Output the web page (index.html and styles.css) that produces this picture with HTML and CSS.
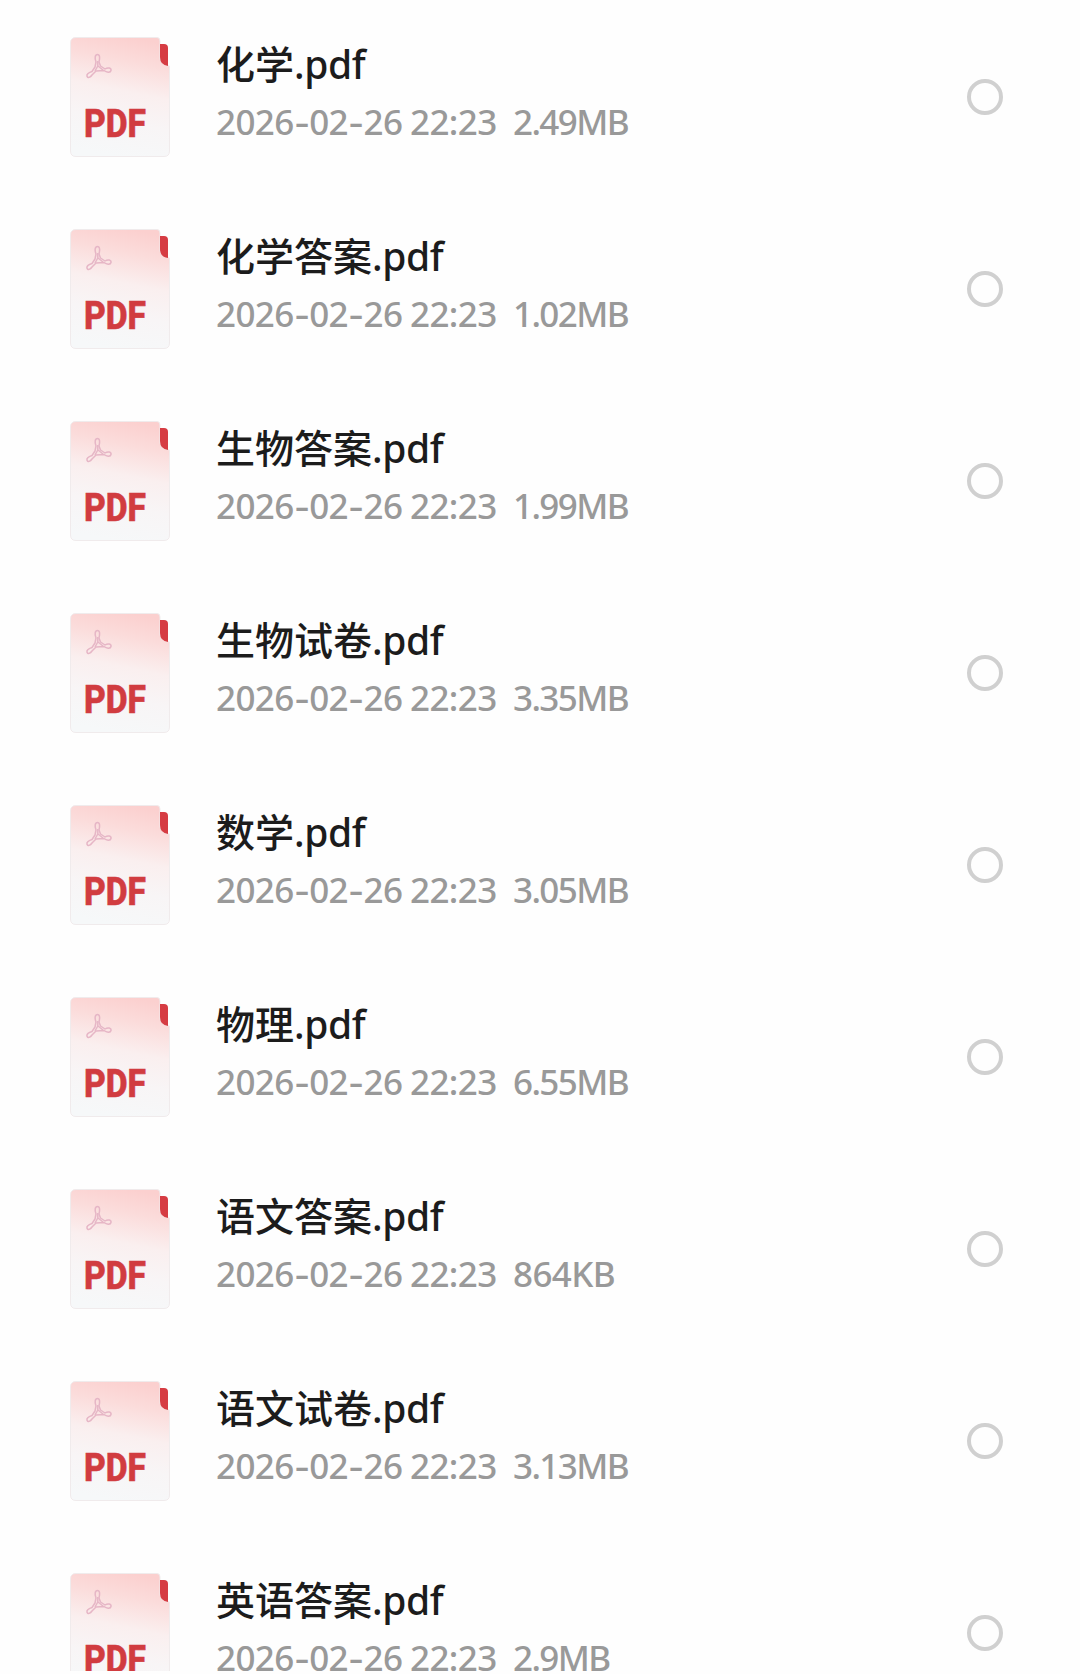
FILE: index.html
```html
<!DOCTYPE html>
<html lang="zh-Hans">
<head>
  <meta charset="UTF-8" />
  <title>选择文件</title>
  <link rel="stylesheet" href="styles.css">
</head>
<body>
  <!-- PDF 图标 -->
  <svg class="defs" width="0" height="0">
    <defs>
      <linearGradient id="paper" x1="0.62" y1="0" x2="0.45" y2="1">
        <stop offset="0" stop-color="#fbd0cf" />
        <stop offset="0.2" stop-color="#fbdcdb" />
        <stop offset="0.45" stop-color="#faefef" />
        <stop offset="0.7" stop-color="#f8f5f6" />
        <stop offset="1" stop-color="#f6f8f9" />
      </linearGradient>
      <symbol id="pdf" viewBox="0 0 100 120">
        <path d="M6 .5H87Q90 .5 90 4V22Q91 28 99.500 29V114Q99.500 119.500 94 119.500H6Q.5 119.500 .5 114V6Q.5 .5 6 .5Z" fill="url(#paper)" stroke="#f0ebec" stroke-width="1" />
        <path d="M90 7H94Q98 7 98 11V29Q90 28 90 20Z" fill="#d63c43" />
        <g fill="none" stroke="#e6b6c6" stroke-width="1.500" stroke-linejoin="round">
          <path d="M26 25C24.500 21 25 17.500 27.500 17.500C30 17.500 30 21 29 25L30.500 29L35 32C38 30 41.500 31 41 33.500C40.500 36 36.500 35.500 34 33.500L26 34L22 38C20.500 40.500 17.500 41.500 17 39C16.500 37 19 35.500 22 34.500L25 30Z" />
          <path d="M27.800 24V29L25 34M28 29L33 33" />
        </g>
        <text class="pdf-label" x="14" y="100" textLength="62" lengthAdjust="spacingAndGlyphs">PDF</text>
      </symbol>
    </defs>
  </svg>

  <ul class="file-list">
    <li class="file">
      <svg class="icon"><use href="#pdf" /></svg>
      <div class="info">
        <div class="name">化学<span class="ext">.pdf</span></div>
        <div class="meta"><span class="date">2026<i>-</i>02<i>-</i>26</span><span class="time">22:23</span><span class="size">2.49MB</span></div>
      </div>
      <span class="radio"></span>
    </li>
    <li class="file">
      <svg class="icon"><use href="#pdf" /></svg>
      <div class="info">
        <div class="name">化学答案<span class="ext">.pdf</span></div>
        <div class="meta"><span class="date">2026<i>-</i>02<i>-</i>26</span><span class="time">22:23</span><span class="size">1.02MB</span></div>
      </div>
      <span class="radio"></span>
    </li>
    <li class="file">
      <svg class="icon"><use href="#pdf" /></svg>
      <div class="info">
        <div class="name">生物答案<span class="ext">.pdf</span></div>
        <div class="meta"><span class="date">2026<i>-</i>02<i>-</i>26</span><span class="time">22:23</span><span class="size">1.99MB</span></div>
      </div>
      <span class="radio"></span>
    </li>
    <li class="file">
      <svg class="icon"><use href="#pdf" /></svg>
      <div class="info">
        <div class="name">生物试卷<span class="ext">.pdf</span></div>
        <div class="meta"><span class="date">2026<i>-</i>02<i>-</i>26</span><span class="time">22:23</span><span class="size">3.35MB</span></div>
      </div>
      <span class="radio"></span>
    </li>
    <li class="file">
      <svg class="icon"><use href="#pdf" /></svg>
      <div class="info">
        <div class="name">数学<span class="ext">.pdf</span></div>
        <div class="meta"><span class="date">2026<i>-</i>02<i>-</i>26</span><span class="time">22:23</span><span class="size">3.05MB</span></div>
      </div>
      <span class="radio"></span>
    </li>
    <li class="file">
      <svg class="icon"><use href="#pdf" /></svg>
      <div class="info">
        <div class="name">物理<span class="ext">.pdf</span></div>
        <div class="meta"><span class="date">2026<i>-</i>02<i>-</i>26</span><span class="time">22:23</span><span class="size">6.55MB</span></div>
      </div>
      <span class="radio"></span>
    </li>
    <li class="file">
      <svg class="icon"><use href="#pdf" /></svg>
      <div class="info">
        <div class="name">语文答案<span class="ext">.pdf</span></div>
        <div class="meta"><span class="date">2026<i>-</i>02<i>-</i>26</span><span class="time">22:23</span><span class="size kb">864KB</span></div>
      </div>
      <span class="radio"></span>
    </li>
    <li class="file">
      <svg class="icon"><use href="#pdf" /></svg>
      <div class="info">
        <div class="name">语文试卷<span class="ext">.pdf</span></div>
        <div class="meta"><span class="date">2026<i>-</i>02<i>-</i>26</span><span class="time">22:23</span><span class="size">3.13MB</span></div>
      </div>
      <span class="radio"></span>
    </li>
    <li class="file">
      <svg class="icon"><use href="#pdf" /></svg>
      <div class="info">
        <div class="name">英语答案<span class="ext">.pdf</span></div>
        <div class="meta"><span class="date">2026<i>-</i>02<i>-</i>26</span><span class="time">22:23</span><span class="size">2.9MB</span></div>
      </div>
      <span class="radio"></span>
    </li>
  </ul>
</body>
</html>
```
FILE: styles.css
```css
:root {
  --text: #1c1c1c;
  --muted: #999;
  --ring: #d0d0d0;
  --red: #d13c40;
}

body {
  margin: 0;
  background: #fefefe;
  color: var(--text);
  font-family: "Noto Sans", "Noto Sans CJK SC", sans-serif;
}

.defs { display: block; }

.file-list {
  height: 1671px;
  margin: 0;
  padding: 1px 0 0;
  box-sizing: border-box;
  overflow: hidden;
  list-style: none;
}

.file {
  display: flex;
  align-items: center;
  height: 192px;
  padding: 0 77px 0 70px;
  box-sizing: border-box;
}

.icon {
  flex: none;
  width: 100px;
  height: 120px;
}

.pdf-label {
  font-family: Roboto, sans-serif;
  font-size: 39px;
  font-weight: 800;
  fill: var(--red);
  stroke: var(--red);
  stroke-width: 0.6px;
}

.info {
  flex: 1;
  margin-left: 46px;
  padding-bottom: 9px;
}

.name {
  height: 59px;
  line-height: 55px;
  font-family: "Noto Sans CJK SC", sans-serif;
  font-size: 39px;
  font-weight: 500;
  white-space: nowrap;
}

.ext {
  font-family: "Noto Sans", sans-serif;
  letter-spacing: -0.4px;
}

.meta {
  display: flex;
  height: 56px;
  line-height: 56px;
  font-size: 35px;
  font-weight: 500;
  letter-spacing: -0.6px;
  color: var(--muted);
  white-space: nowrap;
}

.date { width: 194px; }
.time { width: 103px; }

/* 日期里的横线要比字体自带的宽一些 */
.date i {
  display: inline-block;
  width: 15.5px;
  font-style: normal;
  text-align: center;
  transform: scaleX(1.3);
}

.size { letter-spacing: -1.6px; }
.size.kb { letter-spacing: -0.6px; }

.radio {
  width: 36px;
  height: 36px;
  box-sizing: border-box;
  border: 4px solid var(--ring);
  border-radius: 50%;
}
```
